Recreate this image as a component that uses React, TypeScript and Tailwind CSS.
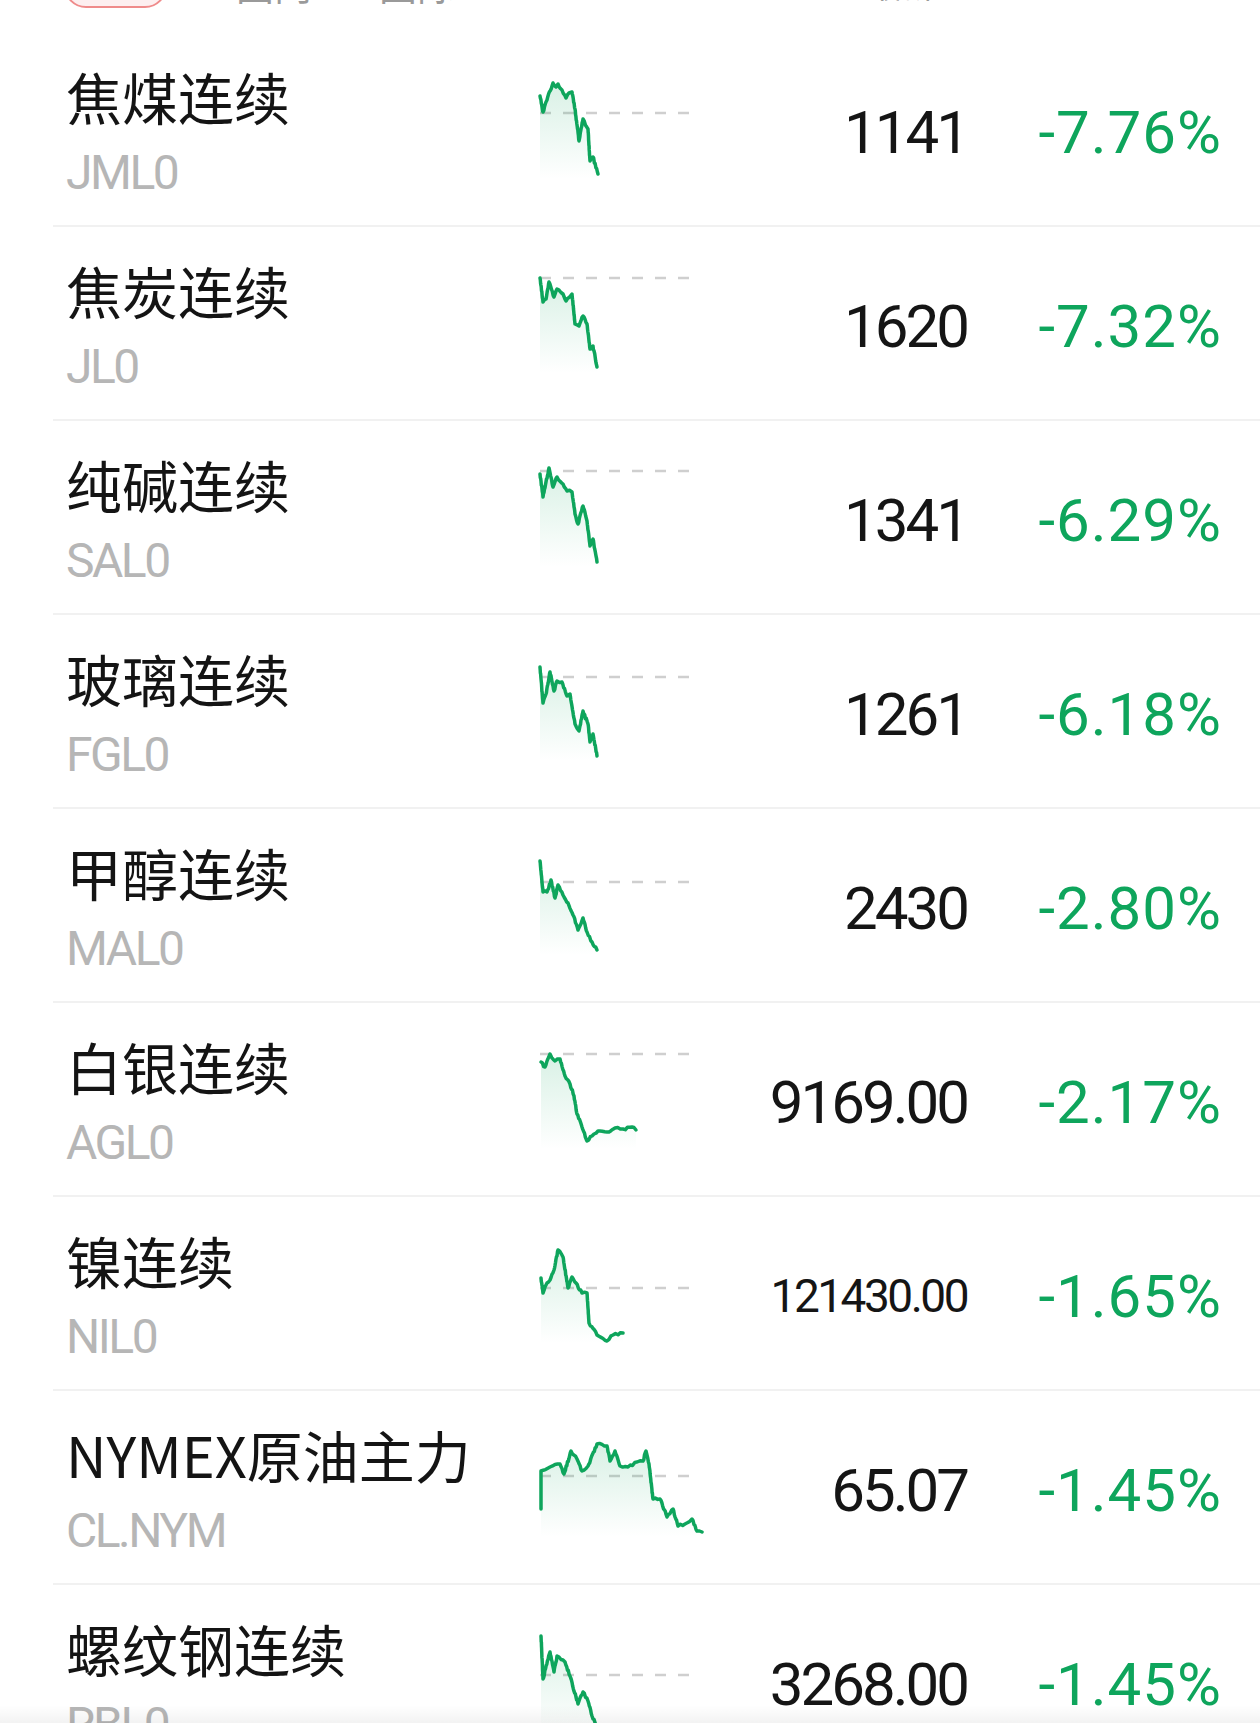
const GREEN = "#0ea55c";

type Row = {
  name: string;
  code: string;
  price: string;
  pct: string;
  base: number;
  small?: boolean;
  pts: number[][];
};

const rows: Row[] = [
  {
    name: "焦煤连续", code: "JML0", price: "1141", pct: "-7.76%", base: 34,
    pts: [[1, 17], [4, 33], [7, 23], [14, 4], [17, 8], [19, 5], [27, 19], [30, 14], [33, 13], [36, 30], [40, 62], [44, 40], [49, 50], [51, 82], [54, 78], [59, 95]],
  },
  {
    name: "焦炭连续", code: "JL0", price: "1620", pct: "-7.32%", base: 5,
    pts: [[1, 5], [4, 29], [7, 26], [10, 9], [15, 24], [18, 16], [24, 21], [27, 28], [33, 21], [36, 51], [40, 53], [44, 43], [48, 51], [51, 76], [54, 73], [58, 94]],
  },
  {
    name: "纯碱连续", code: "SAL0", price: "1341", pct: "-6.29%", base: 4,
    pts: [[1, 7], [4, 30], [10, 1], [14, 20], [18, 10], [24, 17], [28, 24], [33, 25], [36, 47], [39, 57], [44, 39], [48, 54], [51, 79], [54, 72], [58, 95]],
  },
  {
    name: "玻璃连续", code: "FGL0", price: "1261", pct: "-6.18%", base: 16,
    pts: [[1, 6], [4, 42], [7, 33], [11, 11], [15, 30], [18, 20], [23, 21], [28, 35], [31, 33], [36, 63], [40, 70], [44, 50], [49, 63], [51, 81], [54, 73], [58, 95]],
  },
  {
    name: "甲醇连续", code: "MAL0", price: "2430", pct: "-2.80%", base: 27,
    pts: [[1, 6], [4, 37], [8, 37], [12, 25], [16, 43], [19, 30], [24, 40], [29, 48], [34, 60], [39, 75], [44, 63], [48, 77], [53, 87], [58, 95]],
  },
  {
    name: "白银连续", code: "AGL0", price: "9169.00", pct: "-2.17%", base: 5,
    pts: [[2, 13], [6, 18], [11, 5], [16, 12], [21, 10], [26, 27], [31, 35], [35, 47], [38, 65], [43, 78], [48, 92], [53, 87], [61, 82], [68, 83], [76, 79], [84, 80], [93, 78], [97, 81]],
  },
  {
    name: "镍连续", code: "NIL0", price: "121430.00", pct: "-1.65%", base: 45, small: true,
    pts: [[2, 35], [4, 50], [8, 40], [11, 37], [15, 27], [19, 7], [24, 14], [29, 45], [33, 34], [37, 40], [43, 50], [48, 50], [50, 80], [58, 92], [68, 98], [74, 92], [84, 90]],
  },
  {
    name: "NYMEX原油主力", code: "CL.NYM", price: "65.07", pct: "-1.45%", base: 39,
    pts: [[2, 72], [2, 34], [11, 30], [21, 27], [25, 37], [32, 14], [38, 22], [43, 34], [49, 29], [58, 7], [68, 9], [71, 24], [76, 14], [81, 29], [89, 30], [98, 25], [104, 24], [107, 14], [110, 27], [114, 62], [121, 62], [128, 80], [134, 72], [139, 89], [146, 87], [153, 82], [158, 94], [163, 95]],
  },
  {
    name: "螺纹钢连续", code: "RBL0", price: "3268.00", pct: "-1.45%", base: 44,
    pts: [[2, 5], [4, 48], [11, 21], [15, 41], [18, 25], [26, 31], [31, 45], [39, 73], [44, 61], [49, 70], [53, 85], [60, 100]],
  },
];

// break the coarse outline into short noisy steps, like tick data
function rough(pts: number[][], seed: number) {
  let s = seed * 7919 + 13;
  const rnd = () => {
    s = (s * 9301 + 49297) % 233280;
    return s / 233280;
  };
  const out: number[][] = [];
  for (let i = 0; i < pts.length - 1; i++) {
    const [x0, y0] = pts[i];
    const [x1, y1] = pts[i + 1];
    const n = Math.max(1, Math.round(Math.hypot(x1 - x0, y1 - y0) / 2.5));
    for (let k = 0; k < n; k++) {
      const t = k / n;
      const j = k === 0 ? 0 : (rnd() - 0.5) * 2.6;
      out.push([x0 + (x1 - x0) * t, y0 + (y1 - y0) * t + j]);
    }
  }
  out.push(pts[pts.length - 1]);
  return out;
}

function Spark({ row, id }: { row: Row; id: number }) {
  const p = rough(row.pts, id + 1);
  const line = p.map((q, i) => `${i ? "L" : "M"}${q[0].toFixed(1)} ${q[1].toFixed(1)}`).join(" ");
  const first = p[0];
  const last = p[p.length - 1];
  const area = `${line} L${last[0]} 100 L${first[0]} 100 Z`;
  return (
    <svg width="165" height="100" viewBox="0 0 165 100" className="overflow-visible shrink-0">
      <defs>
        <linearGradient id={`fill${id}`} x1="0" y1="0" x2="0" y2="1">
          <stop offset="0%" stopColor={GREEN} stopOpacity="0.16" />
          <stop offset="100%" stopColor={GREEN} stopOpacity="0" />
        </linearGradient>
      </defs>
      <line x1="1" y1={row.base} x2="151" y2={row.base} stroke="#cfcfcf" strokeWidth="2.5" strokeDasharray="11 12" />
      <path d={area} fill={`url(#fill${id})`} />
      <path d={line} fill="none" stroke={GREEN} strokeWidth="3.5" strokeLinejoin="round" strokeLinecap="round" />
    </svg>
  );
}

export default function App() {
  return (
    <div className="relative h-[1723px] w-[1260px] overflow-hidden bg-white">
      {/* tab strip, mostly scrolled off the top */}
      <div className="relative h-[33px] overflow-hidden">
        <div className="absolute left-[64px] top-[-44px] h-[52px] w-[103px] rounded-[22px] border-2 border-[#ef8b8b] bg-[#fdeff0]" />
        <div className="absolute top-[-36px] left-[236px] text-[38px] leading-[40px] text-[#9a9a9a] font-['Noto_Sans_CJK_SC',sans-serif]">国内</div>
        <div className="absolute top-[-36px] left-[379px] text-[38px] leading-[40px] text-[#9a9a9a] font-['Noto_Sans_CJK_SC',sans-serif]">国际</div>
        <div className="absolute top-[-36px] left-[868px] text-[33px] leading-[40px] text-[#9a9a9a] font-['Noto_Sans_CJK_SC',sans-serif]">最新</div>
        <div className="absolute top-[-36px] left-[1109px] text-[28px] leading-[40px] text-[#9a9a9a] font-['Noto_Sans_CJK_SC',sans-serif]">涨跌幅</div>
      </div>

      <div className="ml-[53px]">
        {rows.map((r, i) => (
          <div key={r.code} className="flex h-[194px] items-center border-b-2 border-[#f1f1f1] pl-[13px]">
            <div className="flex w-[473px] shrink-0 flex-col pt-[6px]">
              <div className="text-[56px] leading-[64px] text-[#141414] font-['Noto_Sans_CJK_SC',sans-serif]">{r.name}</div>
              <div className="mt-[17px] text-[48px] leading-[56px] tracking-[-2.5px] text-[#b6b6b6] font-['Roboto',sans-serif]">
                {r.code}
              </div>
            </div>
            <Spark row={r} id={i} />
            <div
              className={`flex-1 pt-[7px] text-right text-[#151515] font-['Roboto',sans-serif] ${
                r.small ? "text-[46px] tracking-[-2.5px]" : "text-[60px] tracking-[-3px]"
              }`}
            >
              {r.price}
            </div>
            <div className="w-[293px] shrink-0 pr-[38px] pt-[7px] text-right text-[60px] tracking-[1px] font-['Roboto',sans-serif] text-[#0ea55c]">
              {r.pct}
            </div>
          </div>
        ))}
      </div>

      <div className="pointer-events-none absolute bottom-0 left-0 h-[18px] w-full bg-gradient-to-b from-transparent to-black/5" />
    </div>
  );
}
